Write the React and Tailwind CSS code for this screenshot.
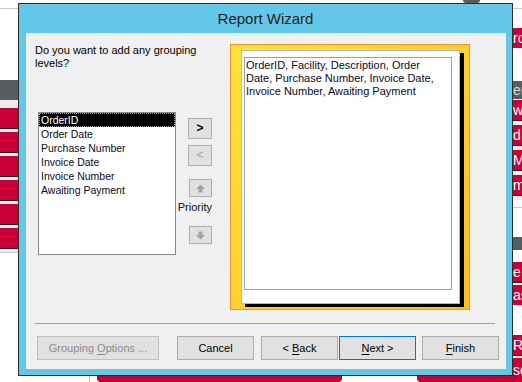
import React from "react";

const fields = [
  "OrderID",
  "Order Date",
  "Purchase Number",
  "Invoice Date",
  "Invoice Number",
  "Awaiting Payment",
];

// one red row of the table behind the dialog
const RedRow = ({ label, gap = "h-[3px]" }) => (
  <>
    <div className="h-[20px] bg-[#c80037] text-white text-[14px] leading-[20px] whitespace-nowrap overflow-hidden">
      {label}
    </div>
    <div className="h-px bg-[#1e1e1e]" />
    <div className={`${gap} bg-[#eeeeee]`} />
  </>
);

const Btn = ({ className = "", children }) => (
  <div
    className={`h-[24px] border bg-[#e1e1e1] text-center text-[11px] leading-[22px] ${className}`}
  >
    {children}
  </div>
);

const Arrow = ({ down }) => (
  <svg width="9" height="9" viewBox="0 0 9 9" className={down ? "rotate-180" : ""}>
    <polygon points="4.5,0.5 9,5 6.5,5 6.5,8.5 2.5,8.5 2.5,5 0,5" fill="#a3a3a3" />
  </svg>
);

const App = () => {
  return (
    <div className="w-[522px] h-[382px] overflow-hidden bg-white flex font-['Liberation_Sans',Arial,sans-serif]">
      {/* left strip of the page behind */}
      <div className="w-[18px] flex flex-col">
        <div className="h-[8px]" />
        <div className="h-px bg-[#c8c8c8]" />
        <div className="h-[71px]" />
        <div className="h-[20px] bg-[#545d61]" />
        <div className="h-[8px] bg-[#eeeeee]" />
        {[0, 1, 2, 3, 4, 5].map((i) => (
          <RedRow key={i} />
        ))}
        <div className="h-px bg-[#c8c8c8]" />
      </div>

      {/* middle: dialog */}
      <div className="w-[495px] flex flex-col">
        <div className="h-[3px] flex">
          <div className="ml-[445px] w-[17px] h-[3px] bg-[#5b5b5b] rounded-b-sm" />
        </div>

        <div className="w-[495px] h-[373px] border border-[#2b2b2b] bg-[#63c8e8] flex flex-col">
          <div className="h-[29px] text-center text-[15px] leading-[29px] text-[#1b1b1b]">
            Report Wizard
          </div>

          <div className="ml-[7px] w-[480px] h-[336px] bg-[#f0f0f0] flex flex-col text-black">
            <div className="flex h-[277px] pt-[11px]">
              {/* label + field list */}
              <div className="w-[150px] pl-[9px] flex flex-col">
                <p className="w-[165px] text-[11px] leading-[13px]">
                  Do you want to add any grouping levels?
                </p>
                <div className="ml-[3px] mt-[42px] w-[138px] h-[143px] border border-[#828790] bg-white text-[10.5px] leading-[14px] text-[#0a0a1e]">
                  {fields.map((f, i) => (
                    <div
                      key={f}
                      className={
                        i === 0
                          ? "h-[14px] pl-[2px] bg-black text-white outline outline-dotted outline-[#9a9a9a] -outline-offset-1"
                          : "h-[14px] pl-[2px]"
                      }
                    >
                      {f}
                    </div>
                  ))}
                </div>
              </div>

              {/* move / priority buttons */}
              <div className="w-[36px] flex flex-col items-end">
                <div className="mt-[74px] w-[24px] h-[21px] border border-[#adadad] bg-[#e1e1e1] text-center text-[12px] leading-[19px] font-bold">
                  &gt;
                </div>
                <div className="mt-[6px] w-[24px] h-[21px] border border-[#adadad] bg-[#e1e1e1] text-center text-[12px] leading-[19px] text-[#a3a3a3]">
                  &lt;
                </div>
                <div className="mt-[13px] w-[23px] h-[18px] border border-[#adadad] bg-[#e1e1e1] flex items-center justify-center">
                  <Arrow />
                </div>
                <div className="mt-[4px] text-[11px] leading-[13px] text-[#0a0a1e]">Priority</div>
                <div className="mt-[12px] w-[23px] h-[18px] border border-[#adadad] bg-[#e1e1e1] flex items-center justify-center">
                  <Arrow down />
                </div>
              </div>

              {/* preview */}
              <div className="ml-[18px] w-[240px] h-[266px] border border-[#f7941d] bg-linear-to-br from-[#ffe33c] to-[#fbbd2e]">
                <div className="ml-[10px] mt-[5px] w-[219px] h-[254px] bg-white border border-[#b9b9b9] shadow-[4px_3px_0_0_#000]">
                  <div className="ml-[2px] mt-[6px] w-[208px] h-[233px] border border-[#a0a0a0] pl-[1px] pt-[1px] pr-[12px] text-[11px] leading-[13px] text-[#0a0a1e]">
                    OrderID, Facility, Description, Order Date, Purchase Number, Invoice Date,
                    Invoice Number, Awaiting Payment
                  </div>
                </div>
              </div>
            </div>

            <div className="mt-[13px] ml-[9px] w-[460px] h-px bg-[#a0a0a0]" />

            <div className="mt-[12px] pl-[11px] flex">
              <Btn className="w-[122px] border-[#bfbfbf] text-[#8a8a8a]">
                Grouping <u className="underline-offset-2">O</u>ptions ...
              </Btn>
              <Btn className="ml-[18px] w-[77px] border-[#adadad]">Cancel</Btn>
              <Btn className="ml-[7px] w-[77px] border-[#adadad]">
                &lt; <u className="underline-offset-2">B</u>ack
              </Btn>
              <Btn className="ml-[1px] w-[77px] border-[#0078d7]">
                <u className="underline-offset-2">N</u>ext &gt;
              </Btn>
              <Btn className="ml-[6px] w-[77px] border-[#adadad]">
                <u className="underline-offset-2">F</u>inish
              </Btn>
            </div>
          </div>
        </div>

        <div className="h-[6px] flex">
          <div className="ml-[71px] w-px bg-[#c0c0c0]" />
          <div className="ml-[7px] w-[245px] bg-[#c80037] border-x border-b border-[#333] rounded-b-sm" />
          <div className="ml-[75px] w-[96px] bg-[#c80037] border-l border-b border-[#333] rounded-bl-sm" />
        </div>
      </div>

      {/* right strip of the page behind */}
      <div className="w-[9px] flex flex-col">
        <div className="h-[8px]" />
        <div className="h-px bg-[#c8c8c8]" />
        <div className="h-[19px]" />
        <div className="h-[20px] bg-[#c80037] text-white text-[14px] leading-[20px] whitespace-nowrap overflow-hidden">
          ro
        </div>
        <div className="h-[33px]" />
        <div className="h-[18px] bg-[#545d61] text-[#d8d8d8] text-[14px] leading-[18px] whitespace-nowrap overflow-hidden">
          er
        </div>
        <div className="h-px" />
        <RedRow label="w" gap="h-[4px]" />
        <RedRow label="d" gap="h-[4px]" />
        <RedRow label="M" gap="h-[4px]" />
        <RedRow label="m" gap="h-[4px]" />
        <div className="h-[7px]" />
        <div className="h-px bg-[#c8c8c8]" />
        <div className="h-[29px]" />
        <div className="h-[13px] bg-[#545d61]" />
        <div className="h-[12px]" />
        <RedRow label="e" gap="h-[2px]" />
        <div className="h-[20px] bg-[#c80037] text-white text-[14px] leading-[20px] whitespace-nowrap overflow-hidden">
          as
        </div>
        <div className="h-[30px]" />
        <RedRow label="R" gap="h-[2px]" />
        <div className="h-[24px] bg-[#c80037] text-white text-[14px] leading-[24px] whitespace-nowrap overflow-hidden">
          se
        </div>
      </div>
    </div>
  );
};

export default App;
